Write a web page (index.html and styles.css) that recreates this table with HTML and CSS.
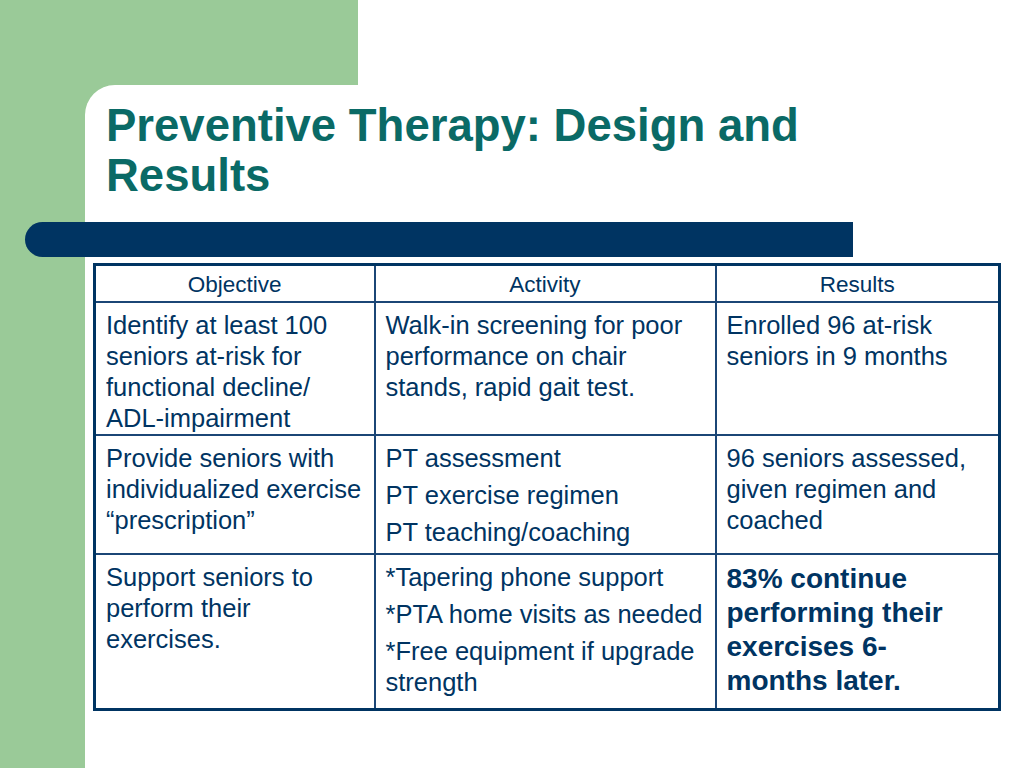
FILE: index.html
```html
<!DOCTYPE html>
<html>
<head>
<meta charset="utf-8">
<link rel="stylesheet" href="styles.css">
</head>
<body>
<div class="slide">
  <div class="top"><div class="top-green"></div></div>
  <div class="main">
    <div class="side"></div>
    <div class="content">
      <h1 class="title">Preventive Therapy: Design and<br>Results</h1>
      <div class="bar"></div>
      <table class="grid">
        <colgroup><col class="c1"><col class="c2"><col class="c3"></colgroup>
        <tr class="head"><th>Objective</th><th>Activity</th><th>Results</th></tr>
        <tr class="r1">
          <td><p>Identify at least 100 seniors at-risk for functional decline/ ADL-impairment</p></td>
          <td><p>Walk-in screening for poor performance on chair stands, rapid gait test.</p></td>
          <td><p>Enrolled 96 at-risk seniors in 9 months</p></td>
        </tr>
        <tr class="r2">
          <td><p>Provide seniors with individualized exercise “prescription”</p></td>
          <td><p>PT assessment</p><p>PT exercise regimen</p><p>PT teaching/coaching</p></td>
          <td><p>96 seniors assessed, given regimen and coached</p></td>
        </tr>
        <tr class="r3">
          <td><p>Support seniors to perform their exercises.</p></td>
          <td><p>*Tapering phone support</p><p>*PTA home visits as needed</p><p>*Free equipment if upgrade strength</p></td>
          <td><p class="strong">83% continue performing their exercises 6-months later.</p></td>
        </tr>
      </table>
    </div>
  </div>
</div>
</body>
</html>
```
FILE: styles.css
```css
html, body { margin: 0; padding: 0; }
body { background: #fff; font-family: "Liberation Sans", Arial, sans-serif; }
.slide { width: 1024px; height: 768px; display: flex; flex-direction: column; overflow: hidden; }
.top { height: 85px; display: flex; flex: none; }
.top-green { width: 358px; background: #9aca98; }
.main { flex: 1; display: flex; background: linear-gradient(to right, #9aca98 358px, #fff 358px); }
.side { width: 85px; flex: none; background: #9aca98; }
.content { flex: 1; background: #fff; border-top-left-radius: 30px; padding-top: 16px; display: flex; flex-direction: column; }
.title { margin: 0 0 0 21px; font-size: 45.5px; line-height: 50px; font-weight: bold; color: #0a6a66; }
.bar { margin: 21px 0 0 -60px; width: 828px; height: 35px; background: #003462; border-radius: 18px 0 0 18px; }
.grid { margin: 6px 0 0 8px; width: 905px; border-collapse: collapse; border: 3px solid #003462; table-layout: fixed; color: #003462; }
.c1 { width: 280px; }
.c2 { width: 341px; }
.c3 { width: 284px; }
.grid th, .grid td { border: 2px solid #1b4676; vertical-align: top; text-align: left; padding: 7px 8px 0 10px; }
.grid th { font-weight: normal; font-size: 22.5px; text-align: center; vertical-align: middle; padding: 2px 0 0 0; height: 33px; }
.grid td { font-size: 25.5px; line-height: 31px; }
.grid p { margin: 0 0 6px 0; }
.grid p:last-child { margin-bottom: 0; }
.r1 td { height: 124px; }
.r2 td { height: 110px; }
.r3 td { height: 146px; }
.grid p.strong { font-weight: bold; font-size: 28px; line-height: 34px; margin-top: 0; max-width: 235px; }
```
